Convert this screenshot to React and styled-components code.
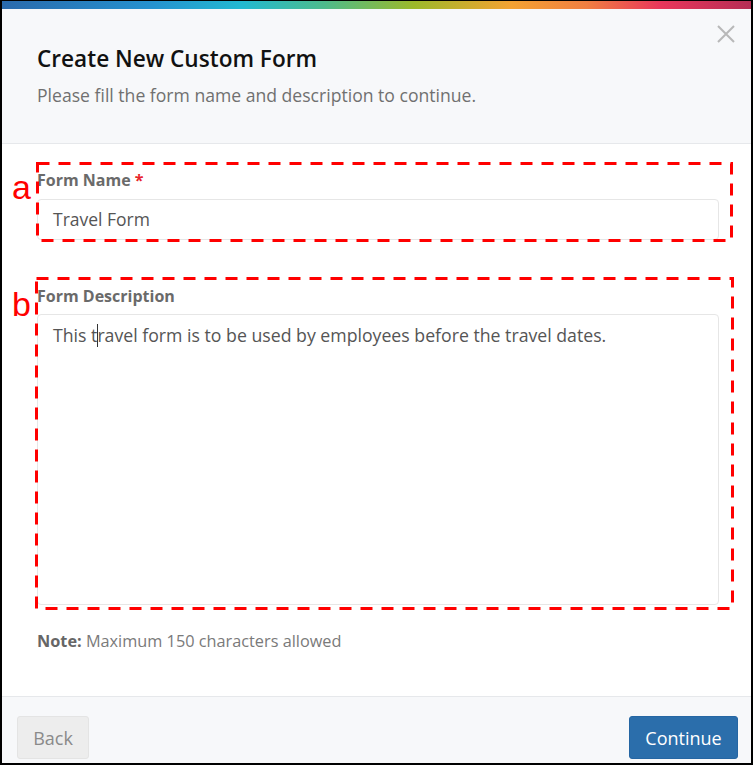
import React from "react";
import styled, { createGlobalStyle } from "styled-components";

const GlobalStyle = createGlobalStyle`
  * { box-sizing: border-box; }
  body {
    margin: 0;
    background: #ffffff;
    font-family: "Open Sans", "Noto Sans", sans-serif;
  }
`;

const Modal = styled.div`
  width: 753px;
  height: 765px;
  border: 2px solid #000;
  border-top-width: 1px;
  display: flex;
  flex-direction: column;
  background: #fff;
  position: relative;
`;

const RainbowBar = styled.div`
  height: 8px;
  flex-shrink: 0;
  background: linear-gradient(
    90deg,
    #2a6aac 0%,
    #2592cf 20%,
    #22b9d1 32%,
    #4dbb8c 43%,
    #9cb92a 55%,
    #f4a232 68%,
    #f07f42 78%,
    #e8365b 88%,
    #b52e55 100%
  );
`;

const Header = styled.header`
  position: relative;
  flex-shrink: 0;
  height: 135px;
  padding: 35px 35px 0;
  background: #f7f8fa;
  border-bottom: 1px solid #e6e8eb;
`;

const Title = styled.h1`
  margin: 0;
  font-size: 22.6px;
  line-height: 30px;
  font-weight: 600;
  color: #111;
`;

const Subtitle = styled.p`
  margin: 10px 0 0;
  font-size: 17.6px;
  line-height: 22px;
  color: #707070;
`;

const CloseButton = styled.button`
  position: absolute;
  top: 15px;
  right: 15px;
  width: 20px;
  height: 20px;
  padding: 0;
  border: none;
  background: none;
  display: flex;
  align-items: center;
  justify-content: center;
  cursor: pointer;
`;

const Body = styled.div`
  flex: 1;
  padding: 26px 32px 0 35px;
  display: flex;
  flex-direction: column;
`;

const Field = styled.div`
  position: relative;
  margin-top: ${p => p.$gap || 0}px;
`;

const Label = styled.label`
  display: block;
  font-size: 16px;
  line-height: 20px;
  font-weight: 700;
  color: #6a6a6a;
  margin-bottom: ${p => p.$mb || 8}px;
`;

const Required = styled.span`
  color: #e8242b;
  margin-left: 4px;
`;

const Input = styled.div`
  height: 41px;
  padding: 0 15px;
  border: 1px solid #e6e6e6;
  border-radius: 4px;
  display: flex;
  align-items: center;
  font-size: 17.5px;
  line-height: 23px;
  color: #555;
`;

const TextArea = styled.div`
  height: 291px;
  padding: 9px 15px;
  border: 1px solid #e6e6e6;
  border-radius: 4px;
  font-size: 17.7px;
  line-height: 23px;
  color: #555;
`;

const Caret = styled.span`
  display: inline-block;
  width: 1px;
  height: 23px;
  margin: 0 -1px 0 0;
  vertical-align: top;
  background: #333;
`;

const Note = styled.p`
  margin: 26px 0 0;
  font-size: 16.3px;
  line-height: 20px;
  color: #7a7a7a;

  b {
    color: #666;
  }
`;

const Marker = styled.svg`
  position: absolute;
  top: ${p => p.$top}px;
  left: ${p => p.$left}px;
  width: calc(100% - ${p => p.$left + p.$right}px);
  height: calc(100% - ${p => p.$top + p.$bottom}px);
  overflow: visible;
  pointer-events: none;

  rect {
    x: 1.5px;
    y: 1.5px;
    width: calc(100% - 3px);
    height: calc(100% - 3px);
    fill: none;
    stroke: #ff0000;
    stroke-width: 3;
    stroke-dasharray: 12 9;
  }
`;

const MarkerLetter = styled.span`
  position: absolute;
  left: -25px;
  top: ${p => p.$top}px;
  font-family: "Liberation Sans", Arial, sans-serif;
  font-size: 34px;
  line-height: 32px;
  color: #ff0000;
`;

const Footer = styled.footer`
  flex-shrink: 0;
  height: 67px;
  padding: 19px 13px 0 15px;
  background: #f7f8fa;
  border-top: 1px solid #e6e8eb;
  display: flex;
  justify-content: space-between;
  align-items: flex-start;
`;

const Button = styled.button`
  width: ${p => (p.$primary ? 109 : 72)}px;
  height: 43px;
  padding: 0;
  border-radius: 3px;
  font-family: "Open Sans", "Noto Sans", sans-serif;
  font-size: 18px;
  border: 1px solid ${p => (p.$primary ? "#2566a3" : "#e4e4e4")};
  background: ${p => (p.$primary ? "#2b6eab" : "#ededed")};
  color: ${p => (p.$primary ? "#fff" : "#8a8a8a")};
  cursor: pointer;
`;

const Annotation = ({ top, left, right, bottom, letter, letterTop }) => (
  <>
    <Marker $top={-top} $left={-left} $right={-right} $bottom={-bottom}>
      <rect />
    </Marker>
    <MarkerLetter $top={letterTop}>{letter}</MarkerLetter>
  </>
);

export default function App() {
  return (
    <>
      <GlobalStyle />
      <Modal>
        <RainbowBar />
        <Header>
          <Title>Create New Custom Form</Title>
          <Subtitle>Please fill the form name and description to continue.</Subtitle>
          <CloseButton aria-label="Close">
            <svg width="18" height="18" viewBox="0 0 18 18">
              <path d="M1 1L17 17M17 1L1 17" stroke="#b8b8b8" strokeWidth="2" />
            </svg>
          </CloseButton>
        </Header>
        <Body>
          <Field>
            <Label $mb={9}>
              Form Name<Required>*</Required>
            </Label>
            <Input>Travel Form</Input>
            <Annotation top={8} left={1} right={14} bottom={2} letter="a" letterTop={1} />
          </Field>
          <Field $gap={46}>
            <Label>Form Description</Label>
            <TextArea>
              This t<Caret />ravel form is to be used by employees before the travel dates.
            </TextArea>
            <Annotation top={9} left={2} right={15} bottom={5} letter="b" letterTop={2} />
          </Field>
          <Note>
            <b>Note:</b> Maximum 150 characters allowed
          </Note>
        </Body>
        <Footer>
          <Button>Back</Button>
          <Button $primary>Continue</Button>
        </Footer>
      </Modal>
    </>
  );
}
